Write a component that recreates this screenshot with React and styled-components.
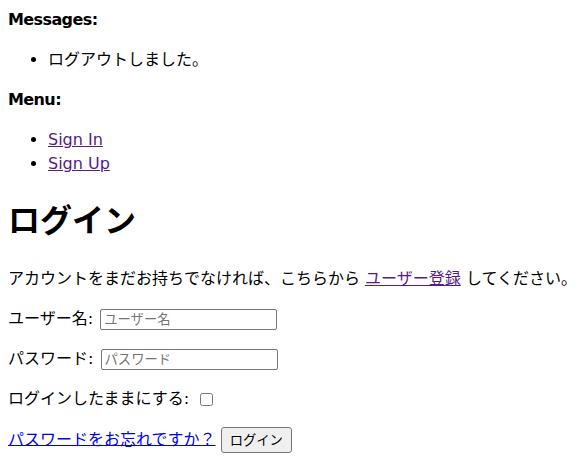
import styled, { createGlobalStyle } from "styled-components";

const GlobalStyle = createGlobalStyle`
  body {
    margin: 8px;
    font-family: "DejaVu Sans", "Noto Sans CJK JP", sans-serif;
    font-size: 16px;
    line-height: 24px;
    color: #000;
    background: #fff;
  }
`;

const Caption = styled.div`
  margin: 0;
  font-weight: bold;
  letter-spacing: -0.6px;
`;

const Para = styled.p`
  margin: 16px 0;
  white-space: ${(p) => (p.$nowrap ? "nowrap" : "normal")};
`;

const List = styled.ul`
  margin: 16px 0;
  padding-left: 40px;
`;

const Title = styled.h1`
  font-size: 32px;
  line-height: 48px;
  margin: 21.44px 0;
  font-weight: bold;
`;

const Link = styled.a`
  color: ${(p) => (p.$visited ? "#551a8b" : "#0000ee")};
  text-decoration: underline;
`;

const Field = styled.input`
  box-sizing: border-box;
  width: 177px;
  height: 21px;
  margin: 0 0 0 2px;
  padding: 1px 3px;
  border: 1px solid #767676;
  border-radius: 2px;
  font-family: inherit;
  font-size: 13.33px;
  vertical-align: middle;
  &::placeholder {
    color: #757575;
  }
`;

const Check = styled.input`
  box-sizing: border-box;
  width: 13px;
  height: 13px;
  margin: 3px 3px 3px 6px;
  vertical-align: middle;
`;

const Button = styled.button`
  box-sizing: border-box;
  height: 26px;
  padding: 1px 8px;
  background: #efefef;
  border: 1px solid #767676;
  border-radius: 3px;
  font-family: inherit;
  font-size: 13.33px;
  color: #000;
  vertical-align: middle;
`;

export default function App() {
  return (
    <>
      <GlobalStyle />
      <Caption>Messages:</Caption>
      <List>
        <li>ログアウトしました。</li>
      </List>
      <Caption>Menu:</Caption>
      <List>
        <li>
          <Link $visited href="#">Sign In</Link>
        </li>
        <li>
          <Link $visited href="#">Sign Up</Link>
        </li>
      </List>
      <Title>ログイン</Title>
      <Para $nowrap>
        アカウントをまだお持ちでなければ、こちらから{" "}
        <Link $visited href="#">ユーザー登録</Link> してください。
      </Para>
      <form onSubmit={(e) => e.preventDefault()}>
        <Para>
          <label>ユーザー名:</label> <Field type="text" placeholder="ユーザー名" />
        </Para>
        <Para>
          <label>パスワード:</label> <Field type="password" placeholder="パスワード" />
        </Para>
        <Para>
          <label>ログインしたままにする:</label> <Check type="checkbox" />
        </Para>
        <Para>
          <Link href="#">パスワードをお忘れですか？</Link> <Button type="submit">ログイン</Button>
        </Para>
      </form>
    </>
  );
}
